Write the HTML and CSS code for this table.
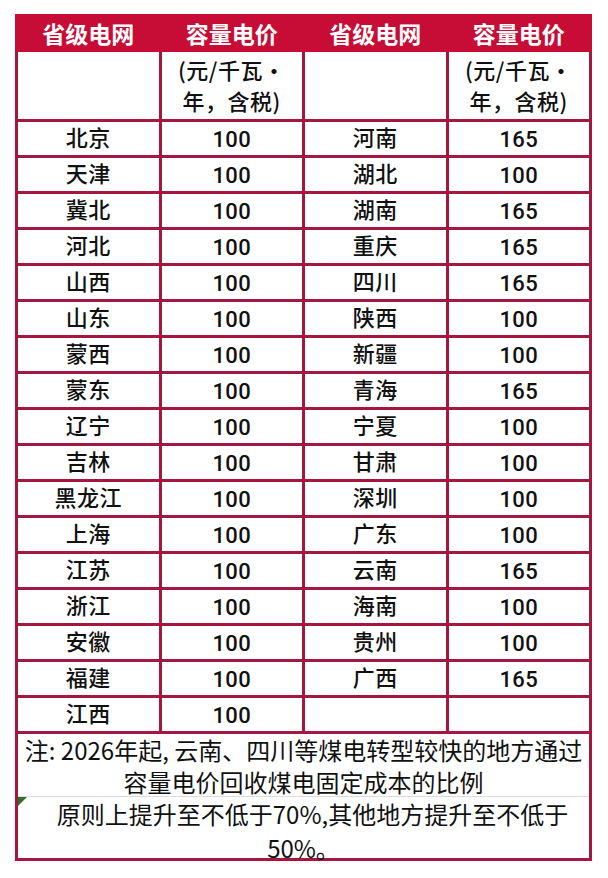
FILE: index.html
```html
<!DOCTYPE html>
<html lang="zh-CN">
<head>
<meta charset="utf-8">
<title>容量电价</title>
<link rel="stylesheet" href="styles.css">
</head>
<body>
<div class="sheet">
  <div class="head">
    <div>省级电网</div><div>容量电价</div><div>省级电网</div><div>容量电价</div>
  </div>
  <div class="grid">
    <div class="cell unit"></div>
    <div class="cell unit">(元/千瓦·<br>年，含税)</div>
    <div class="cell unit"></div>
    <div class="cell unit">(元/千瓦·<br>年，含税)</div>

    <div class="cell">北京</div><div class="cell num">100</div><div class="cell">河南</div><div class="cell num">165</div>
    <div class="cell">天津</div><div class="cell num">100</div><div class="cell">湖北</div><div class="cell num">100</div>
    <div class="cell">冀北</div><div class="cell num">100</div><div class="cell">湖南</div><div class="cell num">165</div>
    <div class="cell">河北</div><div class="cell num">100</div><div class="cell">重庆</div><div class="cell num">165</div>
    <div class="cell">山西</div><div class="cell num">100</div><div class="cell">四川</div><div class="cell num">165</div>
    <div class="cell">山东</div><div class="cell num">100</div><div class="cell">陕西</div><div class="cell num">100</div>
    <div class="cell">蒙西</div><div class="cell num">100</div><div class="cell">新疆</div><div class="cell num">100</div>
    <div class="cell">蒙东</div><div class="cell num">100</div><div class="cell">青海</div><div class="cell num">165</div>
    <div class="cell">辽宁</div><div class="cell num">100</div><div class="cell">宁夏</div><div class="cell num">100</div>
    <div class="cell">吉林</div><div class="cell num">100</div><div class="cell">甘肃</div><div class="cell num">100</div>
    <div class="cell">黑龙江</div><div class="cell num">100</div><div class="cell">深圳</div><div class="cell num">100</div>
    <div class="cell">上海</div><div class="cell num">100</div><div class="cell">广东</div><div class="cell num">100</div>
    <div class="cell">江苏</div><div class="cell num">100</div><div class="cell">云南</div><div class="cell num">165</div>
    <div class="cell">浙江</div><div class="cell num">100</div><div class="cell">海南</div><div class="cell num">100</div>
    <div class="cell">安徽</div><div class="cell num">100</div><div class="cell">贵州</div><div class="cell num">100</div>
    <div class="cell">福建</div><div class="cell num">100</div><div class="cell">广西</div><div class="cell num">165</div>
    <div class="cell">江西</div><div class="cell num">100</div><div class="cell"></div><div class="cell"></div>

    <div class="note">
      <div class="note-top">注: 2026年起, 云南、四川等煤电转型较快的地方通过<br>容量电价回收煤电固定成本的比例</div>
      <div class="note-bottom">
        <span class="flag"></span>
        <div class="line3">原则上提升至不低于70%,其他地方提升至不低于</div>
        <div class="line4">50%。</div>
      </div>
    </div>
  </div>
</div>
</body>
</html>
```
FILE: styles.css
```css
html, body {
  margin: 0;
  background: #ffffff;
}

body {
  font-family: "Noto Sans CJK SC", "Noto Sans", sans-serif;
  color: #111111;
}

.sheet {
  margin: 14px 0 0 15px;
  width: 577px;
}

.head {
  display: grid;
  grid-template-columns: repeat(4, 1fr);
  column-gap: 3px;
  padding: 0 3px;
  height: 38px;
  align-items: center;
  text-align: center;
  background: #c70d35;
  color: #ffffff;
  font-weight: 700;
  font-size: 23px;
  line-height: 38px;
}

.grid {
  display: grid;
  grid-template-columns: repeat(4, 1fr);
  grid-template-rows: 67px repeat(17, 33px) auto;
  gap: 3px;
  padding: 0 3px 3px;
  background: #a5173f;
}

.cell {
  background: #ffffff;
  display: flex;
  align-items: center;
  justify-content: center;
  padding-bottom: 4px;
  box-sizing: border-box;
  font-size: 22px;
  font-weight: 500;
  line-height: 29px;
  letter-spacing: 0.5px;
}

.cell.num {
  padding-bottom: 0;
  padding-top: 1px;
  font-family: Roboto, "Noto Sans", sans-serif;
  font-weight: 500;
  letter-spacing: 0.3px;
}

.cell.unit {
  line-height: 31px;
  text-align: center;
  padding-bottom: 2px;
}

.note {
  grid-column: 1 / -1;
  background: #ffffff;
  font-size: 24px;
  font-weight: 400;
  text-align: center;
}

.note-top {
  height: 62px;
  line-height: 32px;
  white-space: nowrap;
}

.note-bottom {
  position: relative;
  height: 61px;
  border-top: 1px solid #dcdcdc;
  line-height: 34px;
}

.line3 {
  padding-left: 18px;
  white-space: nowrap;
}

.line4 {
  white-space: nowrap;
}

.flag {
  position: absolute;
  left: 0;
  top: 0;
  width: 0;
  height: 0;
  border-top: 9px solid #2f6f2a;
  border-right: 9px solid transparent;
}
```
